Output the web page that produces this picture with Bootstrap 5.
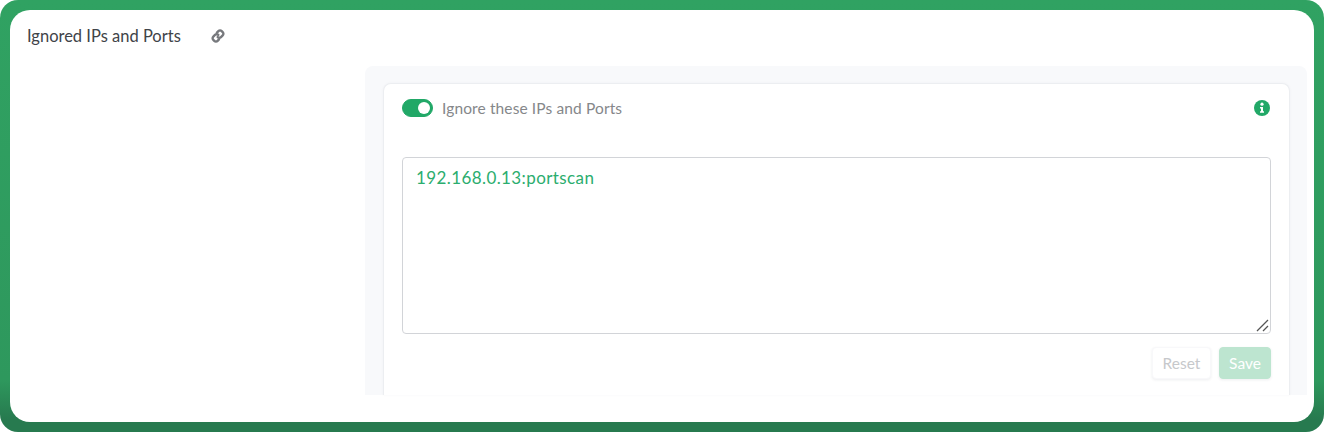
<!DOCTYPE html>
<html lang="en">
<head>
    <meta charset="UTF-8">
    <meta name="viewport" content="width=device-width, initial-scale=1.0">
    <title>Ignored IPs and Ports</title>
    <link href="https://cdn.jsdelivr.net/npm/bootstrap@5.3.0/dist/css/bootstrap.min.css" rel="stylesheet">
    <style>
        html, body { height: 100%; background: #fff; overflow: hidden; }
        body { font-family: "Lato", "Liberation Sans", sans-serif; }
        .green-frame { height: 432px; padding: 10px; border-radius: 18px; background: linear-gradient(180deg, #30a262 0%, #2e985d 88%, #277a4f 97%); }
        .white-sheet { height: 412px; background: #fff; border-radius: 20px; overflow: hidden; }
        .sheet-title { height: 56px; padding: 0 0 4px 17px; font-size: 16.5px; line-height: 20px; color: #404348; }
        .sheet-title svg { margin-left: 30px; }
        .gray-panel { width: 942px; height: 329px; margin-right: 7px; padding: 17px 17px 0 18px; background: #f8f9fb; border-radius: 8px 8px 0 0; }
        .settings-card { height: 312px; padding: 15px 18px 0; border: 1px solid #eceef1; border-bottom: 0; border-radius: 8px 8px 0 0; background: #fff; box-shadow: 0 0 3px rgba(40, 50, 70, .04); }
        .toggle-row { height: 18px; }
        .form-switch .toggle-input { width: 31px; height: 18px; margin: 0; float: none; background-color: #21a867; border-color: #21a867; box-shadow: none; }
        .toggle-text { margin-left: 9px; padding-top: 1px; font-size: 15.5px; letter-spacing: .12px; color: #85878a; }
        .info-mark { margin-right: 1px; }
        .ignore-box { display: block; width: 869px; height: 177px; margin-top: 40px; padding: 9px 13px; font-size: 17px; letter-spacing: .4px; line-height: 22px; color: #2bad6e; border: 1px solid #d2d4d8; border-radius: 4px; outline: 0; resize: vertical; }
        .ignore-box::-webkit-resizer { background: url("data:image/svg+xml,%3Csvg xmlns='http://www.w3.org/2000/svg' width='15' height='15'%3E%3Cpath d='M2 13 13 2M8 13l5-5' stroke='%23555' stroke-width='1.3'/%3E%3C/svg%3E") no-repeat; }
        .save-row { margin-top: 13px; }
        .act-btn { height: 32px; padding: 0; font-size: 15.5px; line-height: 30px; border-radius: 4px; box-shadow: 0 1px 3px rgba(30, 40, 60, .08); }
        .btn.reset-btn:disabled { width: 59px; color: #c6c8cb; background: #fff; border: 1px solid #f8f8fa; opacity: 1; }
        .btn.save-btn:disabled { width: 52px; color: #fff; background: #bde5d0; border: 1px solid #bde5d0; opacity: 1; }
    </style>
</head>
<body class="m-0">
    <div class="green-frame">
        <div class="white-sheet">
            <div class="sheet-title d-flex align-items-center">
                <span>Ignored IPs and Ports</span>
                <svg width="14" height="14" viewBox="0 0 14 14" fill="none" stroke="#77797d" stroke-width="2.4" stroke-linecap="round">
                    <path d="M5.900 3.600 7.400 2.100a2.300 2.300 0 0 1 3.300 0l1 1a2.300 2.300 0 0 1 0 3.300L10 8.100a2.300 2.300 0 0 1-3.300 0"/>
                    <path d="M8 10.400 6.600 11.900a2.300 2.300 0 0 1-3.300 0l-1-1a2.300 2.300 0 0 1 0-3.300L4 5.900a2.300 2.300 0 0 1 3.300 0"/>
                </svg>
            </div>
            <div class="d-flex justify-content-end">
                <div class="gray-panel">
                    <div class="settings-card">
                        <div class="toggle-row d-flex align-items-center">
                            <div class="form-check form-switch m-0 p-0 d-flex align-items-center">
                                <input class="form-check-input toggle-input" type="checkbox" id="ignoreToggle" checked>
                            </div>
                            <label class="toggle-text" for="ignoreToggle">Ignore these IPs and Ports</label>
                            <svg class="info-mark ms-auto" width="16" height="16" viewBox="0 0 16 16">
                                <circle cx="8" cy="8" r="8" fill="#21a867"/>
                                <circle cx="8" cy="4.200" r="1.600" fill="#fff"/>
                                <path d="M6 7h3v4.200h1v1.500H6v-1.500h1V8.500H6z" fill="#fff"/>
                            </svg>
                        </div>
                        <textarea class="ignore-box" spellcheck="false">192.168.0.13:portscan</textarea>
                        <div class="save-row d-flex justify-content-end gap-2">
                            <button class="btn act-btn reset-btn" disabled>Reset</button>
                            <button class="btn act-btn save-btn" disabled>Save</button>
                        </div>
                    </div>
                </div>
            </div>
        </div>
    </div>
    <script src="https://cdn.jsdelivr.net/npm/bootstrap@5.3.0/dist/js/bootstrap.bundle.min.js"></script>
</body>
</html>
